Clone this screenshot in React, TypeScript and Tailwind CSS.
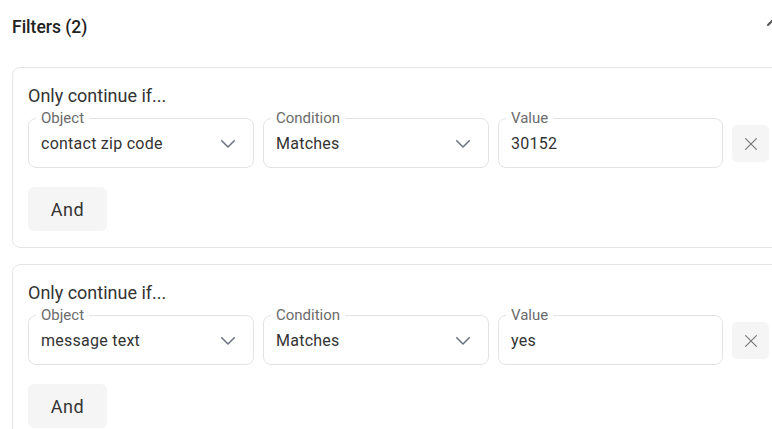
import React from 'react';

type Filter = { object: string; condition: string; value: string };

const FILTERS: Filter[] = [
  { object: 'contact zip code', condition: 'Matches', value: '30152' },
  { object: 'message text', condition: 'Matches', value: 'yes' },
];

function Chevron() {
  return (
    <svg width="14" height="8" viewBox="0 0 14 8" fill="none" stroke="#6b7280" strokeWidth="1.5" strokeLinecap="round" strokeLinejoin="round">
      <polyline points="0.75 0.75 7 7 13.25 0.75" />
    </svg>
  );
}

function Field({ label, value, select, width }: { label: string; value: string; select?: boolean; width: string }) {
  return (
    <fieldset className={`${width} shrink-0 border border-[#e3e3e3] rounded-lg pl-[7px] pr-[18px] pb-[7px]`}>
      <legend className="px-[5px] text-[15px] leading-5 text-[#6b6b6b]">{label}</legend>
      <div className="flex items-center justify-between h-[32px] pl-[5px]">
        <span className="text-[16px] tracking-[0.25px] text-[#333]">{value}</span>
        {select && <Chevron />}
      </div>
    </fieldset>
  );
}

function FilterCard({ filter }: { filter: Filter }) {
  return (
    <div className="rounded-lg border border-[#e6e6e6] pl-[15px] pr-4 pt-4 pb-4">
      <p className="text-[18px] leading-6 text-[#333]">Only continue if...</p>
      <div className="flex items-start gap-[9px]">
        <Field label="Object" value={filter.object} select width="w-[226px]" />
        <Field label="Condition" value={filter.condition} select width="w-[226px]" />
        <Field label="Value" value={filter.value} width="w-[225px]" />
        <button className="mt-[17px] w-[37px] h-[37px] shrink-0 rounded-[5px] bg-[#f5f5f5] flex items-center justify-center">
          <svg width="12" height="12" viewBox="0 0 12 12" fill="none" stroke="#7a7a7a" strokeWidth="1.2" strokeLinecap="round">
            <line x1="0.6" y1="0.6" x2="11.4" y2="11.4" />
            <line x1="11.4" y1="0.6" x2="0.6" y2="11.4" />
          </svg>
        </button>
      </div>
      <button className="mt-[19px] w-[79px] h-[44px] rounded-md bg-[#f5f5f5] text-[18px] tracking-[0.5px] text-[#333]">
        And
      </button>
    </div>
  );
}

export default function App() {
  return (
    <div className="w-[772px] h-[429px] overflow-hidden bg-white font-['Roboto',sans-serif]">
      <div className="w-[798px] px-3">
        <div className="flex items-start justify-between pt-[10px]">
          <h2 className="mt-[5px] text-[17.5px] leading-6 font-medium text-[#222]">Filters (2)</h2>
          <svg width="24" height="24" viewBox="0 0 24 24" fill="none" stroke="#555" strokeWidth="2" strokeLinecap="round" strokeLinejoin="round">
            <path d="m18 15-6-6-6 6" />
          </svg>
        </div>
        <div className="mt-[28px] flex flex-col gap-4">
          {FILTERS.map((f, i) => (
            <FilterCard key={i} filter={f} />
          ))}
        </div>
      </div>
    </div>
  );
}
